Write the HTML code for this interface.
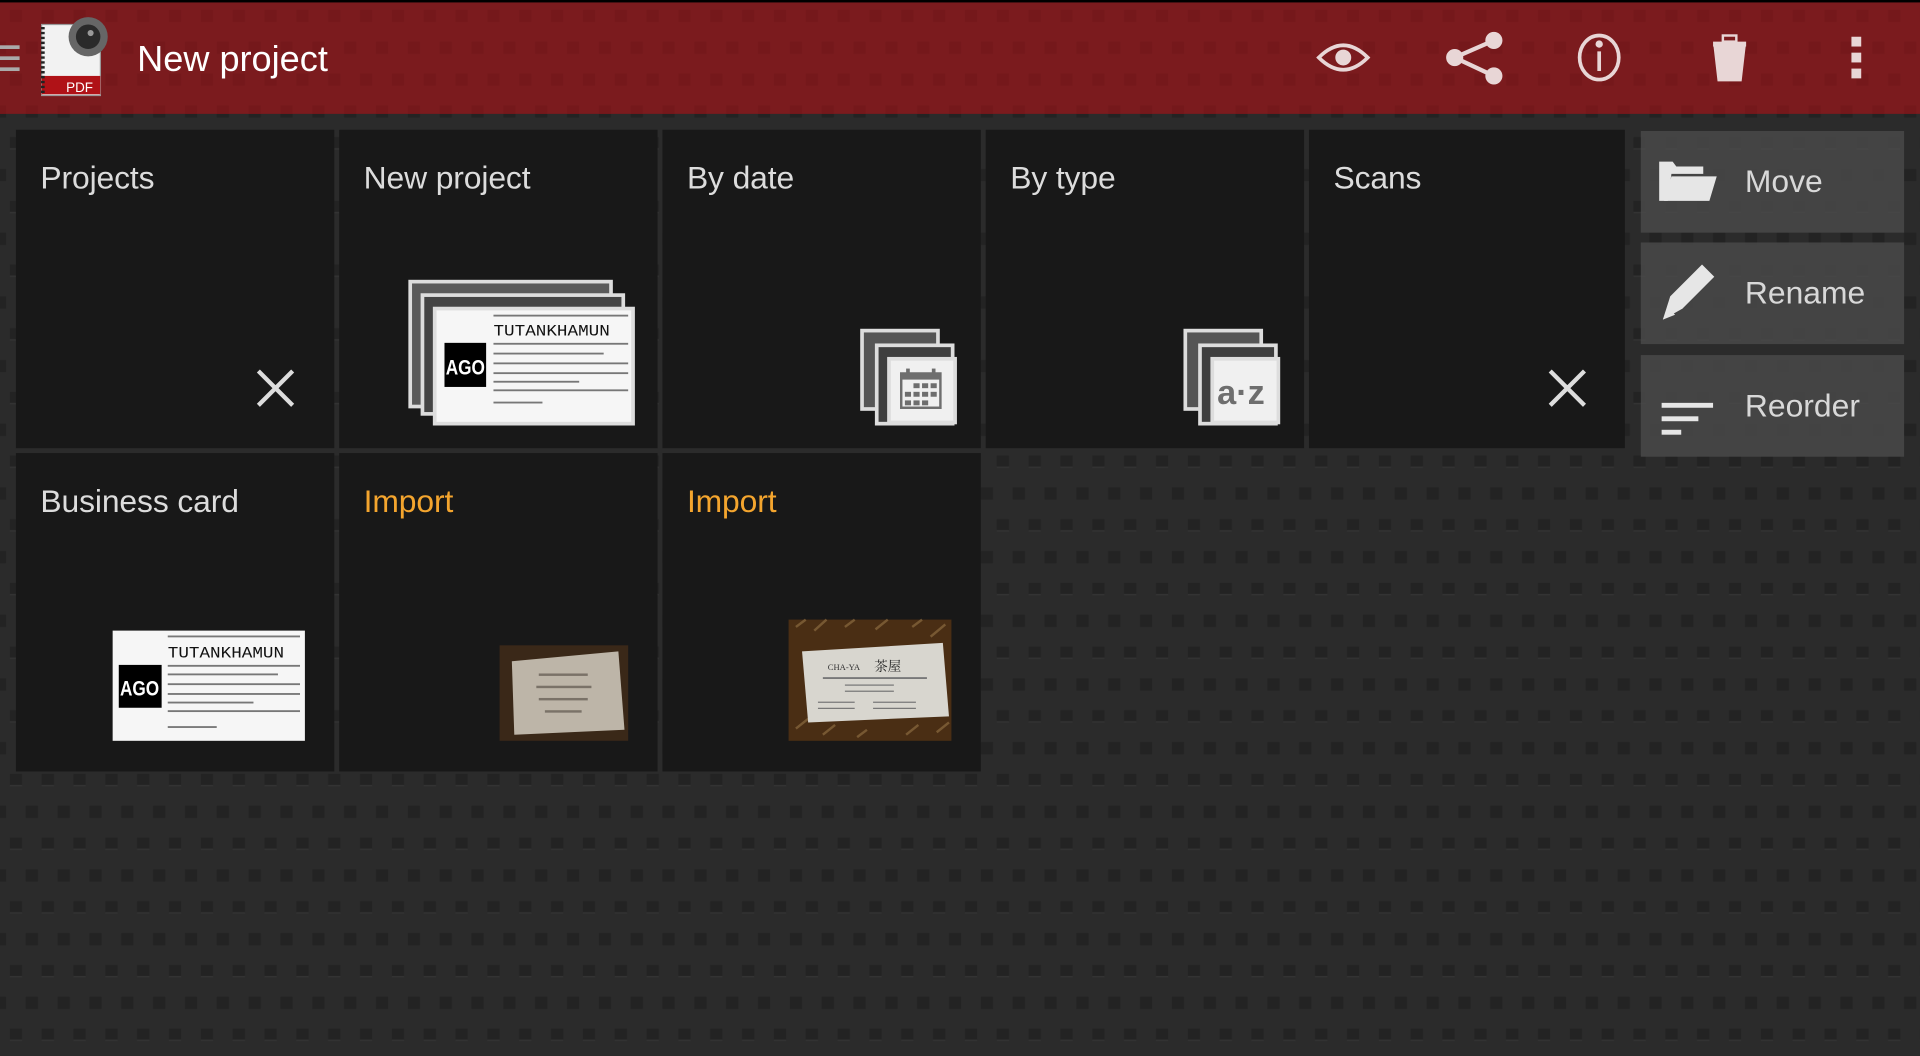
<!DOCTYPE html>
<html><head><meta charset="utf-8"><style>
html,body{margin:0;padding:0;width:1920px;height:1056px;overflow:hidden;background:#2a2a2a;}
#w{position:absolute;left:0;top:0;width:1568px;height:862px;transform:scale(1.22449);transform-origin:0 0;font-family:"Liberation Sans",sans-serif;}
.abs{position:absolute}
.tile{position:absolute;background:#181818;width:260px;height:260px;}
.lab{position:absolute;left:20px;top:24px;font-size:26px;color:#dcdcdc;letter-spacing:-0.1px}
.btn{position:absolute;left:1340px;width:215px;height:83px;background:rgba(75,75,75,0.8);}
.btn span{position:absolute;left:85px;top:26px;font-size:26px;color:#d8d8d8}
</style></head><body><div id="w">
<svg class="abs" style="left:0;top:0" width="1568" height="862">
<defs>
<pattern id="p" width="26" height="52" patternUnits="userSpaceOnUse">
<rect x="8" y="8" width="10" height="10" fill="#232323"/><rect x="8" y="17" width="10" height="1.2" fill="#333"/>
<rect x="-5" y="34" width="10" height="10" fill="#232323"/><rect x="21" y="34" width="10" height="10" fill="#232323"/>
</pattern>
<pattern id="r" width="26" height="52" patternUnits="userSpaceOnUse">
<rect x="8" y="8" width="10" height="10" fill="#721719"/>
<rect x="-5" y="34" width="10" height="10" fill="#721719"/><rect x="21" y="34" width="10" height="10" fill="#721719"/>
</pattern>
</defs>
<rect width="1568" height="862" fill="#2b2b2b"/>
<rect width="1568" height="862" fill="url(#p)"/>
<rect width="1568" height="2" fill="#000"/>
<rect y="2" width="1568" height="91" fill="#7b1b1e"/>
<rect y="2" width="1568" height="91" fill="url(#r)" opacity="0.7"/>
</svg>
<div class="abs" style="left:0;top:37px;width:16px;height:3px;background:#aaa;box-shadow:0 9px 0 #aaa,0 18px 0 #aaa"></div>
<svg class="abs" style="left:30px;top:12px" width="60" height="70">
<rect x="4" y="8" width="48" height="58" fill="#f2f2f2" stroke="#999"/>
<rect x="4" y="50" width="48" height="15" fill="#b01217"/>
<text x="24" y="63" font-size="11" fill="#fff" font-family="Liberation Sans">PDF</text>
<line x1="5" y1="10" x2="5" y2="64" stroke="#222" stroke-width="3" stroke-dasharray="2 2"/>
<circle cx="42" cy="18" r="16" fill="#666"/><circle cx="42" cy="18" r="10" fill="#2a2a2a"/><circle cx="44" cy="15" r="2.5" fill="#999"/>
</svg>
<div class="abs" style="left:112px;top:32px;font-size:29.5px;color:#fff">New project</div>
<svg class="abs" style="left:1070px;top:25px" width="470" height="45" fill="none" stroke="#e8d6d6" stroke-width="3">
<path d="M7 22 Q27 2 47 22 Q27 42 7 22Z"/><circle cx="27" cy="22" r="5" fill="#e8d6d6"/>
<path d="M150 8 L118 22 L150 37" stroke-width="3.5"/><circle cx="150" cy="8" r="5.5" fill="#e8d6d6"/><circle cx="118" cy="22" r="5.5" fill="#e8d6d6"/><circle cx="150" cy="37" r="5.5" fill="#e8d6d6"/>
<ellipse cx="236" cy="22" rx="16" ry="18"/><line x1="236" y1="17" x2="236" y2="33"/><circle cx="236" cy="11" r="1.5" fill="#e8d6d6"/>
<path d="M331 14 H354 L351 40 H334Z" fill="#e8d6d6"/><rect x="329" y="9" width="27" height="4" fill="#e8d6d6" stroke="none"/><rect x="337" y="4" width="11" height="5" stroke-width="2"/>
<g fill="#e8d6d6" stroke="none"><rect x="442" y="5" width="8" height="8"/><rect x="442" y="18" width="8" height="8"/><rect x="442" y="31" width="8" height="8"/></g>
</svg>
<div class="tile" style="left:13px;top:106px"><div class="lab">Projects</div></div>
<div class="tile" style="left:277px;top:106px"><div class="lab">New project</div></div>
<div class="tile" style="left:541px;top:106px"><div class="lab">By date</div></div>
<div class="tile" style="left:805px;top:106px"><div class="lab">By type</div></div>
<div class="tile" style="left:1069px;top:106px;width:258px"><div class="lab">Scans</div></div>
<div class="tile" style="left:13px;top:370px"><div class="lab">Business card</div></div>
<div class="tile" style="left:277px;top:370px"><div class="lab" style="color:#f4a52e">Import</div></div>
<div class="tile" style="left:541px;top:370px"><div class="lab" style="color:#f4a52e">Import</div></div>
<svg class="abs" style="left:0;top:0" width="1568" height="862">
<g stroke="#ddd" stroke-width="3.5"><path d="M211 303 L239 331 M239 303 L211 331"/><path d="M1266 303 L1294 331 M1294 303 L1266 331"/></g>
<rect x="335" y="230" width="164" height="102" fill="#5a5a5a" stroke="#ddd" stroke-width="3"/>
<rect x="345" y="241" width="164" height="97" fill="#444" stroke="#ddd" stroke-width="3"/>
<rect x="355" y="252" width="162" height="94" fill="#f6f6f6" stroke="#ddd" stroke-width="3"/>
<rect x="363" y="280" width="34" height="36" fill="#000"/><text x="364" y="306" font-size="17" font-weight="bold" fill="#fff" font-family="Liberation Sans Narrow,Liberation Sans" textLength="32" lengthAdjust="spacingAndGlyphs">AGO</text>
<text x="403" y="274" font-size="13" fill="#111" font-family="Liberation Mono" textLength="95" lengthAdjust="spacingAndGlyphs">TUTANKHAMUN</text>
<g fill="#777"><rect x="403" y="257" width="110" height="1.5"/><rect x="403" y="280" width="110" height="1.5"/><rect x="403" y="288" width="90" height="1.5"/><rect x="403" y="296" width="110" height="1.5"/><rect x="403" y="304" width="110" height="1.5"/><rect x="403" y="311" width="70" height="1.5"/><rect x="403" y="318" width="110" height="1.5"/><rect x="403" y="328" width="40" height="1.5"/></g>
<g stroke="#ddd" stroke-width="3"><rect x="704" y="270" width="62" height="64" fill="#555"/><rect x="716" y="282" width="62" height="64" fill="#3e3e3e"/><rect x="726" y="293" width="54" height="52" fill="#f0f0f0"/></g>
<g fill="#6e6e6e"><rect x="736" y="305" width="32" height="28" fill="none" stroke="#6e6e6e" stroke-width="2"/><rect x="736" y="305" width="32" height="5"/><rect x="740" y="301" width="3" height="6"/><rect x="761" y="301" width="3" height="6"/>
<rect x="746" y="313" width="5" height="4"/><rect x="753" y="313" width="5" height="4"/><rect x="760" y="313" width="5" height="4"/><rect x="739" y="320" width="5" height="4"/><rect x="746" y="320" width="5" height="4"/><rect x="753" y="320" width="5" height="4"/><rect x="760" y="320" width="5" height="4"/><rect x="739" y="327" width="5" height="4"/><rect x="746" y="327" width="5" height="4"/><rect x="753" y="327" width="5" height="4"/></g>
<g stroke="#ddd" stroke-width="3"><rect x="968" y="270" width="62" height="64" fill="#555"/><rect x="980" y="282" width="62" height="64" fill="#3e3e3e"/><rect x="990" y="293" width="54" height="52" fill="#f0f0f0"/></g>
<text x="994" y="330" font-size="28" font-weight="bold" fill="#6e6e6e" font-family="Liberation Sans">a·z</text>
<rect x="92" y="515" width="157" height="90" fill="#f6f6f6"/>
<rect x="97" y="543" width="35" height="35" fill="#000"/><text x="98" y="568" font-size="17" font-weight="bold" fill="#fff" font-family="Liberation Sans" textLength="32" lengthAdjust="spacingAndGlyphs">AGO</text>
<text x="137" y="537" font-size="13" fill="#111" font-family="Liberation Mono" textLength="95" lengthAdjust="spacingAndGlyphs">TUTANKHAMUN</text>
<g fill="#777"><rect x="137" y="519" width="108" height="1.5"/><rect x="137" y="543" width="108" height="1.5"/><rect x="137" y="550" width="90" height="1.5"/><rect x="137" y="558" width="108" height="1.5"/><rect x="137" y="566" width="108" height="1.5"/><rect x="137" y="573" width="70" height="1.5"/><rect x="137" y="580" width="108" height="1.5"/><rect x="137" y="593" width="40" height="1.5"/></g>
<rect x="408" y="527" width="105" height="78" fill="#3a2818"/>
<polygon points="418,540 505,532 510,596 420,600" fill="#bdb5a8"/>
<g fill="#7a7268"><rect x="440" y="550" width="40" height="2"/><rect x="438" y="560" width="45" height="2"/><rect x="440" y="570" width="40" height="2"/><rect x="445" y="580" width="30" height="2"/></g>
<rect x="644" y="506" width="133" height="99" fill="#4a2e14"/>
<g stroke="#8a6a40" stroke-width="2" opacity="0.7"><path d="M650 512 l8 -6 M665 515 l10 -9 M690 512 l8 -6 M715 514 l10 -8 M745 512 l8 -6 M760 520 l12 -10 M650 595 l10 -8 M672 600 l10 -8 M700 602 l8 -6 M740 600 l10 -8 M765 598 l10 -8"/></g>
<polygon points="655,532 770,525 775,585 660,590" fill="#d8d6cf"/>
<text x="676" y="547" font-size="7" fill="#333" font-family="Liberation Serif">CHA-YA</text>
<text x="714" y="548" font-size="11" fill="#222" font-family="Noto Serif CJK SC,serif">茶屋</text>
<g fill="#777"><rect x="672" y="553" width="85" height="1.5"/><rect x="690" y="559" width="40" height="1"/><rect x="690" y="564" width="40" height="1"/><rect x="668" y="573" width="30" height="1"/><rect x="713" y="573" width="35" height="1"/><rect x="668" y="578" width="30" height="1"/><rect x="713" y="578" width="35" height="1"/></g>
</svg>
<div class="btn" style="top:107px"><span>Move</span></div>
<div class="btn" style="top:198px"><span>Rename</span></div>
<div class="btn" style="top:290px"><span>Reorder</span></div>
<svg class="abs" style="left:1350px;top:120px" width="60" height="240" fill="#e6e6e6">
<path d="M5 12 H16 L19 16 H41 V22 H15 L12 44 H5Z"/><path d="M15 24 H52 L46 44 H9Z"/>
<path d="M8 141 L14 122 L40 96 L50 106 L24 132Z"/><path d="M8 141 L12 131 L18 137Z" />
<rect x="7" y="209" width="42" height="4"/><rect x="7" y="220" width="30" height="4"/><rect x="7" y="231" width="16" height="4"/>
</svg>
</div></body></html>
